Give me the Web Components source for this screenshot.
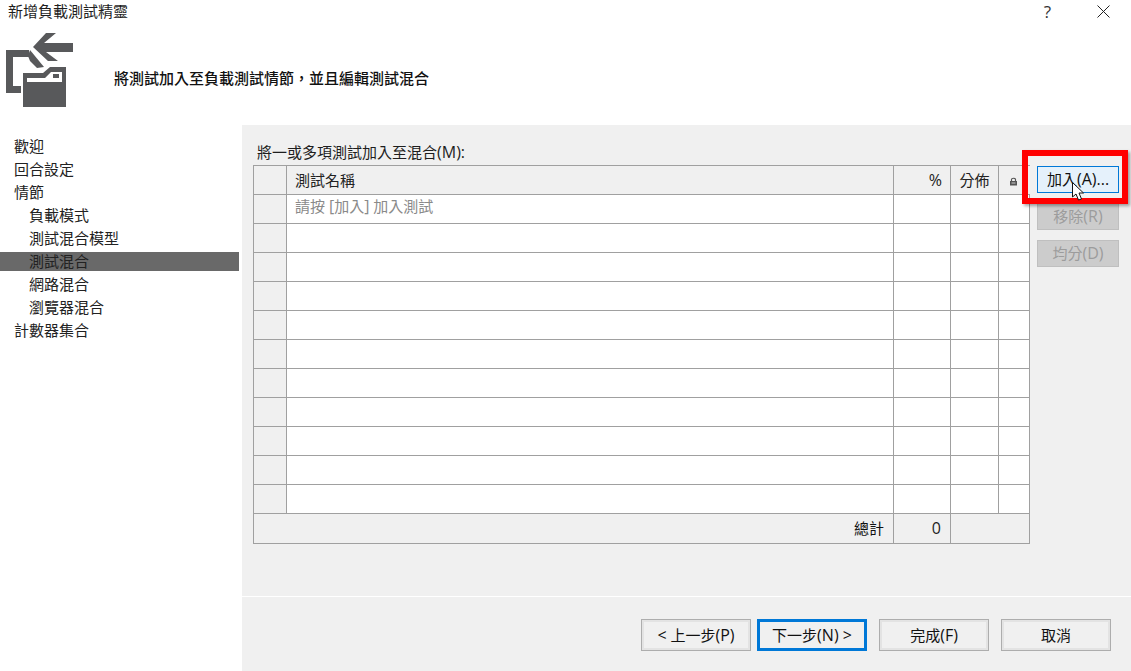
<!DOCTYPE html>
<html lang="zh-Hant"><head><meta charset="utf-8">
<style>
html,body{margin:0;padding:0;height:100%;background:#fff;overflow:hidden}
body{font:15px "Noto Sans CJK TC","Liberation Sans",sans-serif;color:#1e1e1e}
</style></head><body>
<wizard-dialog></wizard-dialog>
<script>
const FONT='"Segoe UI","Open Sans","Noto Sans CJK TC",sans-serif';
function el(name,html,css){
  customElements.define(name,class extends HTMLElement{
    constructor(){super();this.attachShadow({mode:'open'}).innerHTML='<style>'+css+'</style>'+html;}
  });
}
el('title-bar',`<span class="t"><slot></slot></span><span class="help">?</span><svg width="13" height="13" viewBox="0 0 13 13"><path d="M.5 .5l12 12M12.5 .5l-12 12" stroke="#222" stroke-width="1" fill="none"/></svg>`,
`:host{display:flex;align-items:center;height:25px;padding:0 21px 0 8px;box-sizing:border-box}
.t{flex:1;line-height:24px;margin-top:-3px}
.help{margin-right:46px;font-family:"Open Sans",sans-serif;font-size:17px;color:#333;margin-top:-2px}
svg{display:block;margin-top:-2px}`);
el('wizard-icon',`<svg width="76" height="84" viewBox="0 28 76 84">
<path d="M6 50H29V57H13V86H21V93H6Z" fill="#58595b"/>
<path d="M30 50 44 67 37 68 30 61 28 56Z" fill="#58595b"/>
<path d="M33 47 46 33H56L44 43H73V52H46L58 61H48Z" fill="#58595b"/>
<path d="M23 73H43L50 67H66V107H23Z" fill="#58595b"/>
<path d="M27 78H45L51 72H62V82H27Z" fill="#fff"/>
<path d="M53 74H59V78H53Z" fill="#58595b"/>
</svg>`,`:host{display:block;width:76px;height:84px}svg{display:block}`);
el('wizard-header',`<wizard-icon></wizard-icon><span class="h"><slot></slot></span>`,
`:host{display:flex;height:100px;box-sizing:border-box;padding-top:3px}
.h{margin:39px 0 0 38px;line-height:22px;font-weight:500;color:#111}
wizard-icon{flex:none}`);
el('nav-item',`<slot></slot>`,
`:host{display:block;height:23px;line-height:23px;padding-left:14px;white-space:nowrap;color:#222;width:239px;box-sizing:border-box}
:host([sub]){padding-left:29px}
:host([sel]){background:linear-gradient(transparent 0,transparent 3px,#696969 3px,#696969 22px,transparent 22px)}`);
el('wizard-nav',`<slot></slot>`,`:host{display:block;width:242px;padding-top:9px;box-sizing:border-box;flex:none}`);
el('win-btn',`<slot></slot>`,
`:host{display:flex;align-items:center;justify-content:center;box-sizing:border-box;width:110px;height:32px;color:#111;white-space:nowrap;font-family:${FONT};padding-bottom:1px;background:#f0f0f0;border:1px solid #adadad;box-shadow:inset 0 0 0 2px #e3e3e3}
:host([primary]){border:3px solid #0078d7;box-shadow:none}
:host([side]){width:82px;height:27px;box-shadow:none;background:#e1e1e1;padding-bottom:2px}
:host([hot]){background:#e5f1fb;border:1px solid #0078d7}
:host([off]){background:#ccc;border-color:#bfbfbf;color:#9c9c9c}`);
el('grid-row',`<div class="c a"></div><div class="c n"><slot></slot></div><div class="c p"><slot name="p"></slot></div><div class="c d"><slot name="d"></slot></div><div class="c l"><slot name="l"></slot></div>`,
`:host{display:grid;grid-template-columns:33px 607px 57px 48px 31px;height:29px;box-sizing:border-box;border-bottom:1px solid #a0a0a0;background:#fff}
.c{border-right:1px solid #a0a0a0;box-sizing:border-box;line-height:23px;overflow:hidden;white-space:nowrap;font-family:${FONT}}
.l{border-right:0;display:flex;align-items:center;justify-content:center;padding-right:3px}
.a{background:#f0f0f0}
.n{padding-left:8px}
.p{text-align:right;padding-right:8px}
.d{text-align:center}
:host([head]) .c{background:#f0f0f0;color:#222;line-height:29px}
:host([hint]) .n{color:#8a8a8a}`);
el('grid-total',`<div class="c t"><slot></slot></div><div class="c p"><slot name="p"></slot></div><div class="c r"></div>`,
`:host{display:grid;grid-template-columns:640px 57px 79px;height:29px;background:#f0f0f0}
.c{border-right:1px solid #a0a0a0;box-sizing:border-box;line-height:28px;text-align:right;padding-right:9px;font-family:${FONT}}
.r{border:0}
.t{color:#111}`);
el('mix-grid',`<slot></slot>`,`:host{display:block;width:777px;box-sizing:border-box;border:1px solid #a0a0a0;background:#fff}`);
el('mix-panel',`<div class="top"><div class="lab"><slot name="label"></slot></div><div class="row"><div class="g"><slot name="grid"></slot></div><div class="side"><slot name="side"></slot></div></div></div><div class="foot"><slot name="foot"></slot></div>`,
`:host{display:flex;flex-direction:column;flex:1;background:#f0f0f0;min-width:0}
.top{height:472px;padding:16px 0 0 11px;box-sizing:border-box;border-bottom:1px solid #fff;flex:none}
.lab{height:24px;line-height:22px;padding-left:4px;font-family:${FONT}}
.row{display:flex;align-items:flex-start}
.side{display:flex;flex-direction:column;gap:10px;margin-left:7px;padding-top:1px}
.foot{display:flex;gap:6px;padding:22px 20px 0 399px}
.foot ::slotted(*){flex:none}`);
el('wizard-dialog',`<title-bar>新增負載測試精靈</title-bar><wizard-header>將測試加入至負載測試情節，並且編輯測試混合</wizard-header>
<div class="body"><wizard-nav>
<nav-item>歡迎</nav-item><nav-item>回合設定</nav-item><nav-item>情節</nav-item>
<nav-item sub>負載模式</nav-item><nav-item sub>測試混合模型</nav-item><nav-item sub sel>測試混合</nav-item>
<nav-item sub>網路混合</nav-item><nav-item sub>瀏覽器混合</nav-item><nav-item>計數器集合</nav-item>
</wizard-nav><mix-panel>
<span slot="label">將一或多項測試加入至混合<span class="x">(M):</span></span>
<mix-grid slot="grid">
<grid-row head>測試名稱<span slot="p" class="x">%</span><span slot="d">分佈</span><svg slot="l" width="9" height="9" viewBox="0 0 9 9" style="margin-top:2px"><path d="M2.5 4V2.6C2.5 .8 6.5 .8 6.5 2.6V4" fill="none" stroke="#555" stroke-width="1.2"/><rect x="1" y="4" width="7" height="4.5" fill="#555"/><rect x="2.5" y="5.5" width="4" height="1" fill="#ccc"/></svg></grid-row>
<grid-row hint><span>請按 <span class="x">[</span>加入<span class="x">]</span> 加入測試</span></grid-row>
<grid-row></grid-row><grid-row></grid-row><grid-row></grid-row><grid-row></grid-row><grid-row></grid-row><grid-row></grid-row><grid-row></grid-row><grid-row></grid-row><grid-row></grid-row><grid-row></grid-row>
<grid-total>總計<span slot="p" class="x">0</span></grid-total>
</mix-grid>
<win-btn slot="side" side hot><span>加入<span class="x">(A)...</span></span></win-btn>
<win-btn slot="side" side off><span>移除<span class="x">(R)</span></span></win-btn>
<win-btn slot="side" side off><span>均分<span class="x">(D)</span></span></win-btn>
<win-btn slot="foot"><span><span class="x">&lt;</span> 上一步<span class="x">(P)</span></span></win-btn>
<win-btn slot="foot" primary><span>下一步<span class="x">(N) &gt;</span></span></win-btn>
<win-btn slot="foot" style="margin-left:6px"><span>完成<span class="x">(F)</span></span></win-btn>
<win-btn slot="foot" style="margin-left:6px">取消</win-btn>
</mix-panel></div>
<div class="mark"></div>
<svg class="cur" width="14" height="20" viewBox="0 0 14 20"><path d="M1.5 .5V15L5 12 7.5 18 10.5 17 8 11H12.5Z" fill="#fff" stroke="#111" stroke-width="1"/></svg>`,
`:host{display:flex;flex-direction:column;height:671px;width:1131px;position:relative;overflow:hidden;background:#fff;font-family:"Noto Sans CJK TC",sans-serif}
.x{font-size:16px}
.body{display:flex;flex:1;min-height:0}
.mark{position:absolute;left:1022px;top:150px;width:106px;height:54px;box-sizing:border-box;border:6px solid #f00;box-shadow:2px 2px 3px rgba(0,0,0,.35)}
.cur{position:absolute;left:1071px;top:182px}`);
</script></body></html>
